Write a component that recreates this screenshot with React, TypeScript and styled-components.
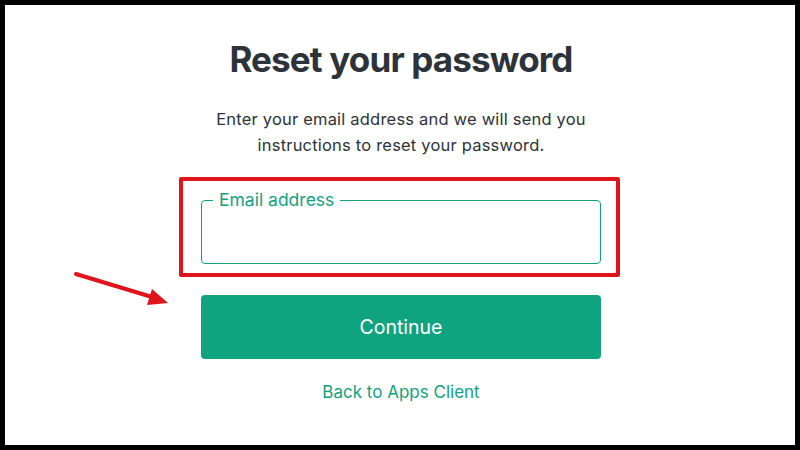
import React from "react";
import styled, { createGlobalStyle } from "styled-components";

const GlobalStyle = createGlobalStyle`
  * { box-sizing: border-box; }
  html, body { margin: 0; padding: 0; background: #000; }
  body { font-family: Inter, "Noto Sans", sans-serif; }
`;

const Frame = styled.div`
  position: relative;
  width: 800px;
  height: 450px;
  background: #ffffff;
  border: 5px solid #000;
  overflow: hidden;
`;

const Column = styled.main`
  width: 400px;
  margin: 0 auto;
  padding-top: 32px;
  padding-left: 2px;
  display: flex;
  flex-direction: column;
  align-items: stretch;
  box-sizing: content-box;
`;

const Title = styled.h1`
  margin: 0;
  font-size: 35px;
  line-height: 44px;
  font-weight: 700;
  color: #2d333a;
  text-align: center;
  letter-spacing: -0.85px;
`;

const Lead = styled.p`
  margin: 25px 0 0;
  font-size: 16.5px;
  line-height: 26px;
  letter-spacing: 0.2px;
  color: #2d333a;
  text-align: center;
`;

const Annotation = styled.div`
  margin: 19px -19px 0 -22px;
  padding: 8px 15px 9px 18px;
  border: 4px solid #e0141b;
  border-radius: 2px;
`;

const Field = styled.fieldset`
  margin: 0;
  padding: 0 12px;
  height: 75px;
  border: 1px solid #10a37f;
  border-radius: 4px;
`;

const Legend = styled.legend`
  margin-left: -1px;
  padding: 0 6px;
  font-size: 17.5px;
  line-height: 22px;
  color: #10a37f;
`;

const Input = styled.input`
  width: 100%;
  height: 40px;
  border: none;
  outline: none;
  background: transparent;
  font: inherit;
  font-size: 16px;
`;

const Button = styled.button`
  margin-top: 18px;
  height: 64px;
  border: none;
  border-radius: 4px;
  background: #10a37f;
  color: #ffffff;
  font-family: Inter, "Noto Sans", sans-serif;
  font-size: 19.5px;
  font-weight: 400;
  cursor: pointer;
`;

const BackLink = styled.a`
  margin-top: 23px;
  font-size: 17px;
  line-height: 20px;
  color: #10a37f;
  text-align: center;
  text-decoration: none;
`;

const Arrow = styled.svg`
  position: absolute;
  left: 0;
  top: 0;
  pointer-events: none;
`;

export default function App() {
  return (
    <>
      <GlobalStyle />
      <Frame>
        <Column>
          <Title>Reset your password</Title>
          <Lead>
            Enter your email address and we will send you
            <br />
            instructions to reset your password.
          </Lead>
          <Annotation>
            <Field>
              <Legend>Email address</Legend>
              <Input type="email" aria-label="Email address" />
            </Field>
          </Annotation>
          <Button type="button">Continue</Button>
          <BackLink href="#">Back to Apps Client</BackLink>
        </Column>
        <Arrow width="790" height="440" viewBox="5 5 790 440">
          <line x1="76" y1="274" x2="152" y2="297" stroke="#e0141b" strokeWidth="4" strokeLinecap="round" />
          <polygon points="168,303 147,305 152,289" fill="#e0141b" />
        </Arrow>
      </Frame>
    </>
  );
}
